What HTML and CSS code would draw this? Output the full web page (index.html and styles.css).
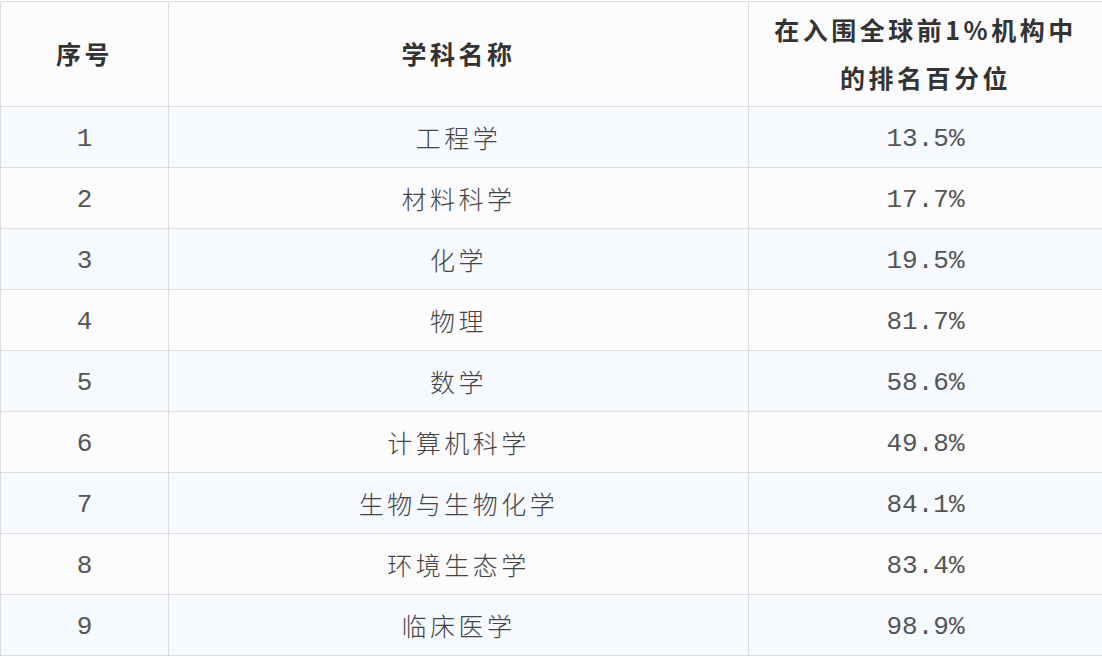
FILE: index.html
```html
<!DOCTYPE html>
<html lang="zh-CN">
<head>
<meta charset="utf-8">
<title>学科排名</title>
<link rel="stylesheet" href="styles.css">
</head>
<body>
<table class="rank-table">
  <colgroup>
    <col class="col-no">
    <col class="col-name">
    <col class="col-pct">
  </colgroup>
  <thead>
    <tr>
      <th>序号</th>
      <th>学科名称</th>
      <th class="wrap">在入围全球前1%机构中的排名百分位</th>
    </tr>
  </thead>
  <tbody>
    <tr class="alt"><td><span class="num">1</span></td><td>工程学</td><td><span class="num">13.5%</span></td></tr>
    <tr><td><span class="num">2</span></td><td>材料科学</td><td><span class="num">17.7%</span></td></tr>
    <tr class="alt"><td><span class="num">3</span></td><td>化学</td><td><span class="num">19.5%</span></td></tr>
    <tr><td><span class="num">4</span></td><td>物理</td><td><span class="num">81.7%</span></td></tr>
    <tr class="alt"><td><span class="num">5</span></td><td>数学</td><td><span class="num">58.6%</span></td></tr>
    <tr><td><span class="num">6</span></td><td>计算机科学</td><td><span class="num">49.8%</span></td></tr>
    <tr class="alt"><td><span class="num">7</span></td><td>生物与生物化学</td><td><span class="num">84.1%</span></td></tr>
    <tr><td><span class="num">8</span></td><td>环境生态学</td><td><span class="num">83.4%</span></td></tr>
    <tr class="alt"><td><span class="num">9</span></td><td>临床医学</td><td><span class="num">98.9%</span></td></tr>
  </tbody>
</table>
</body>
</html>
```
FILE: styles.css
```css
html, body {
  margin: 0;
  padding: 0;
  background: #ffffff;
}

body {
  padding-top: 1px;
  font-family: "Noto Sans CJK SC", "Noto Sans", sans-serif;
  color: #3a3a3a;
}

.rank-table {
  width: 1102px;
  border-collapse: collapse;
  table-layout: fixed;
}

.col-no { width: 168px; }
.col-name { width: 580px; }
.col-pct { width: 354px; }

.rank-table th,
.rank-table td {
  border: 1px solid #dddddd;
  text-align: center;
  vertical-align: middle;
  font-size: 25px;
  letter-spacing: 3.5px;
  padding: 0 20px;
}

.rank-table th {
  height: 101px;
  line-height: 48px;
  padding-bottom: 3px;
  font-weight: 600;
  color: #333333;
  background: #fcfcfc;
}

.rank-table td {
  height: 60px;
  line-height: 46px;
  font-weight: 300;
  color: #444444;
  background: #fcfcfc;
}

.rank-table tr.alt td {
  background: #f6f9fe;
}

.num {
  font-family: "Liberation Mono", "DejaVu Sans Mono", monospace;
  font-size: 26px;
  letter-spacing: 0;
  color: #555555;
}
```
